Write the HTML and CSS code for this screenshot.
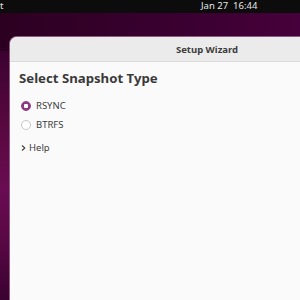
FILE: index.html
```html
<!DOCTYPE html>
<html lang="en">
<head>
    <meta charset="UTF-8">
    <title>Setup Wizard</title>
    <link rel="stylesheet" href="styles.css">
</head>
<body>
    <!-- Top panel -->
    <div class="top-bar">
        <span class="app-name">t</span>
        <span class="clock">Jan 27&nbsp;&nbsp;16:44</span>
    </div>

    <!-- Desktop with the wizard window -->
    <div class="desktop">
        <div class="window">
            <div class="titlebar">Setup Wizard</div>
            <div class="content">
                <h2>Select Snapshot Type</h2>
                <label class="radio"><span class="dot checked"></span>RSYNC</label>
                <label class="radio"><span class="dot"></span>BTRFS</label>
                <div class="expander">
                    <svg width="7" height="8" viewBox="0 0 7 8"><path d="M2 1.5 L4.8 4 L2 6.5" fill="none" stroke="#3d3d3d" stroke-width="1.1"/></svg>
                    Help
                </div>
            </div>
        </div>
    </div>
</body>
</html>
```

FILE: styles.css
```css
html, body {
    margin: 0;
    height: 100%;
    overflow: hidden;
}
body {
    font-family: "Noto Sans", "DejaVu Sans", sans-serif;
    background: #0c0c0c;
    display: flex;
    flex-direction: column;
}
.top-bar {
    height: 13px;
    flex: none;
    background: #0c0c0c;
    color: #e6e6e6;
    font-size: 9.5px;
    line-height: 12px;
    display: flex;
    white-space: nowrap;
}
.app-name {
    width: 4px;
}
.clock {
    margin-left: 197px;
}
.desktop {
    flex: 1;
    background: linear-gradient(90deg, #2c0021 0%, #3a0030 60%, #46003b 100%);
    padding: 24px 0 0 10px;
    position: relative;
    overflow: hidden;
}
.desktop::before {
    content: "";
    position: absolute;
    left: 0;
    top: 38px;
    width: 10px;
    bottom: 0;
    background: linear-gradient(180deg, #3b0230 0%, #58083f 30%, #6a0c52 55%, #5a0845 75%, #3a0230 100%);
}
.window {
    width: 394px;
    height: 100%;
    background: #fafafa;
    border-radius: 7px 7px 0 0;
    box-shadow: 0 0 0 1px #8a5c80;
    overflow: hidden;
    position: relative;
}
.titlebar {
    height: 24px;
    background: #ebebeb;
    border-bottom: 1px solid #dadada;
    color: #3d3d3d;
    font-size: 9.5px;
    font-weight: bold;
    display: flex;
    align-items: center;
    justify-content: center;
}
.content {
    padding: 6px 9px;
    color: #3d3d3d;
}
h2 {
    margin: 0 0 8px;
    font-size: 13.2px;
    line-height: 20px;
    font-weight: bold;
    color: #3a3a3a;
}
.radio {
    display: flex;
    align-items: center;
    gap: 5px;
    height: 19px;
    font-size: 9.5px;
    padding-left: 2px;
}
.dot {
    width: 8px;
    height: 8px;
    border-radius: 50%;
    border: 1px solid #c8c8c8;
    background: #fff;
    box-sizing: content-box;
}
.dot.checked {
    border-color: #8e3a83;
    background: radial-gradient(circle, #fff 0 2px, #8e3a83 2.5px);
}
.expander {
    display: flex;
    align-items: center;
    gap: 2px;
    margin-top: 7px;
    font-size: 9.5px;
    padding-left: 1px;
}
```
